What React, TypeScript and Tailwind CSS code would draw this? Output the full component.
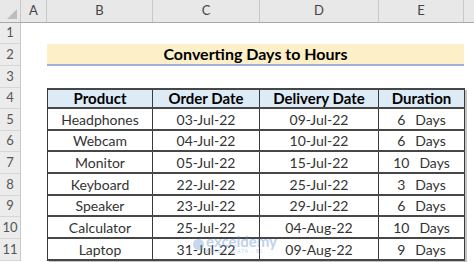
import React from "react";

const rows: [string, string, string, string][] = [
  ["Headphones", "03-Jul-22", "09-Jul-22", "6"],
  ["Webcam", "04-Jul-22", "10-Jul-22", "6"],
  ["Monitor", "05-Jul-22", "15-Jul-22", "10"],
  ["Keyboard", "22-Jul-22", "25-Jul-22", "3"],
  ["Speaker", "23-Jul-22", "29-Jul-22", "6"],
  ["Calculator", "25-Jul-22", "04-Aug-22", "10"],
  ["Laptop", "31-Jul-22", "09-Aug-22", "9"],
];

const rowHeights = ["h-[21px]", "h-[22px]", "h-[22px]", "h-[21px]", "h-[22px]", "h-[21px]", "h-[22px]", "h-[22px]", "h-[21px]", "h-[22px]", "h-[22px]"];
const dataHeights = ["h-[22px]", "h-[21px]", "h-[22px]", "h-[22px]", "h-[21px]", "h-[22px]", "h-[22px]"];

export default function App() {
  return (
    <div className="w-[474px] h-[262px] overflow-hidden bg-white text-[#222]" style={{ fontFamily: "Lato, 'Liberation Sans', sans-serif" }}>
      {/* column headers */}
      <div className="flex h-[23px] bg-[#e8e8e8] border-b border-[#a9a9a9] text-[13px] text-[#444]">
        <div className="w-[21px] relative border-r border-[#c8c8c8]">
          <div className="absolute right-[3px] bottom-[3px] w-0 h-0 border-l-[10px] border-l-transparent border-b-[10px] border-b-[#bdbdbd]" />
        </div>
        <div className="w-[26px] flex items-center justify-center border-r border-[#c8c8c8]">A</div>
        <div className="w-[106px] flex items-center justify-center border-r border-[#c8c8c8]">B</div>
        <div className="w-[107px] flex items-center justify-center border-r border-[#c8c8c8]">C</div>
        <div className="w-[119px] flex items-center justify-center border-r border-[#c8c8c8]">D</div>
        <div className="w-[85px] flex items-center justify-center border-r border-[#c8c8c8]">E</div>
        <div className="flex-1" />
      </div>
      <div className="flex">
        {/* row numbers */}
        <div className="w-[21px] flex flex-col bg-[#ececec] border-r border-[#c8c8c8] text-[13px] text-[#555]">
          {rowHeights.map((h, i) => (
            <div key={i} className={`${h} flex items-end justify-center pb-[1px] border-b border-[#d6d6d6]`}>{i + 1}</div>
          ))}
        </div>
        {/* sheet body */}
        <div className="flex-1 flex flex-col">
          <div className="h-[21px]" />
          <div className="h-[22px] flex">
            <div className="w-[26px]" />
            <div className="w-[417px] bg-[#fdf0c9] border-b-2 border-[#9fb0dc] flex items-center justify-center font-bold text-[16px] text-black">
              Converting Days to Hours
            </div>
          </div>
          <div className="h-[22px]" />
          <div className="flex">
            <div className="w-[26px]" />
            <div className="relative flex flex-col w-[418px] border-l border-[#3a3a3a] shadow-[2px_2px_0_#c4c4c4]">
              <div className="h-[21px] flex bg-[#ddebf7] border-y-2 border-[#474747] font-bold text-[15px] text-black">
                <div className="w-[105px] flex items-center justify-center border-r border-[#3a3a3a]">Product</div>
                <div className="w-[107px] flex items-center justify-center border-r border-[#3a3a3a]">Order Date</div>
                <div className="w-[119px] flex items-center justify-center border-r border-[#3a3a3a]">Delivery Date</div>
                <div className="w-[86px] flex items-center justify-center border-r border-[#3a3a3a]">Duration</div>
              </div>
              {rows.map((r, i) => (
                <div key={i} className={`${dataHeights[i]} flex border-b-2 border-[#474747] text-[14px] text-[#333]`}>
                  <div className="w-[105px] flex items-center justify-center border-r border-[#3a3a3a]">{r[0]}</div>
                  <div className="w-[107px] flex items-center justify-center border-r border-[#3a3a3a]">{r[1]}</div>
                  <div className="w-[119px] flex items-center justify-center border-r border-[#3a3a3a]">{r[2]}</div>
                  <div className="w-[86px] flex items-center justify-center border-r border-[#3a3a3a]">
                    <span>{r[3]}</span>
                    <span className="inline-block w-[10px]" />
                    <span>Days</span>
                  </div>
                </div>
              ))}
              {/* watermark */}
              <div className="absolute left-[145px] top-[146px] flex items-center gap-[2px] opacity-40 pointer-events-none">
                <div className="w-[11px] h-[11px] rounded-full bg-[#6f9fd8]" />
                <div className="flex flex-col leading-none">
                  <span className="text-[15px] font-bold text-[#5f8fcf]">exceldemy</span>
                  <span className="text-[5px] tracking-[1px] text-[#5f8fcf]">EXCEL · DATA · BI</span>
                </div>
              </div>
            </div>
          </div>
        </div>
      </div>
    </div>
  );
}
